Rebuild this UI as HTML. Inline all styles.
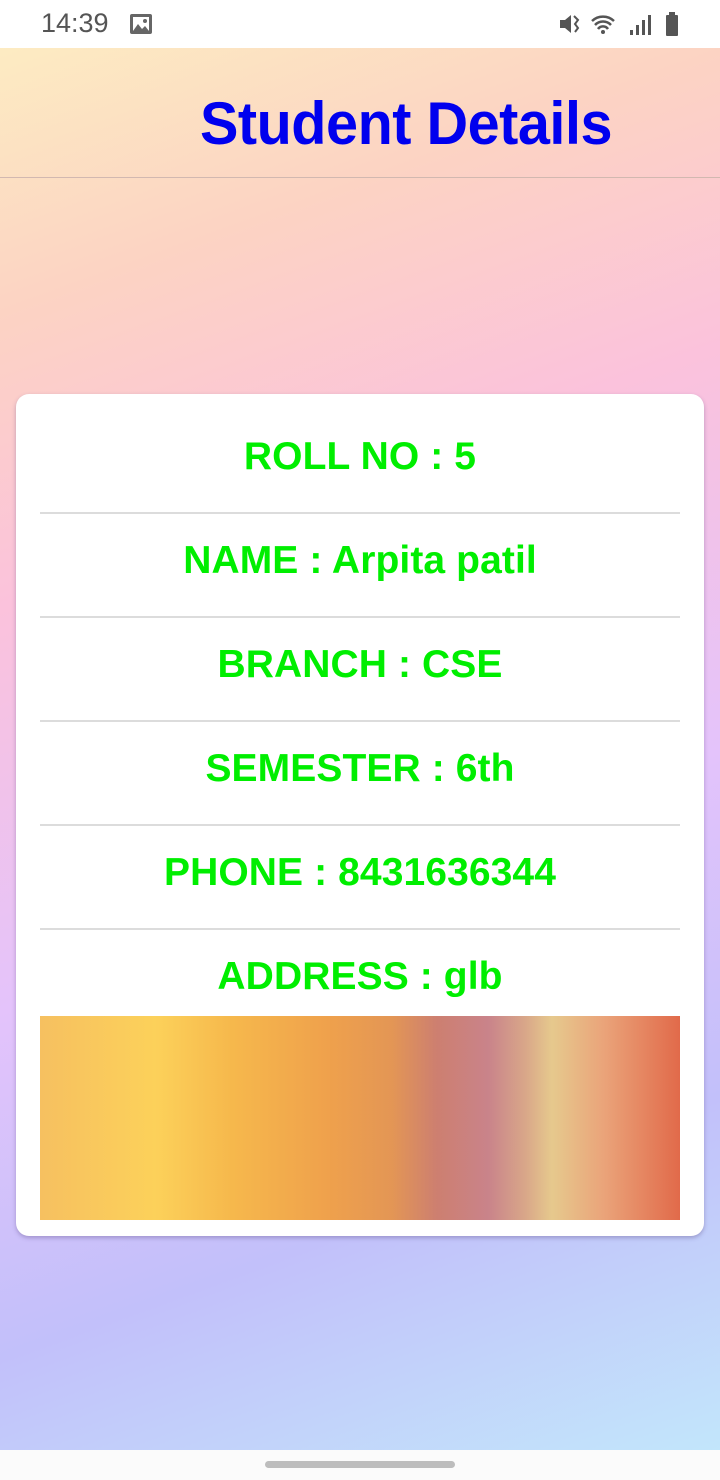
<!DOCTYPE html>
<html><head><meta charset="utf-8"><style>
*{margin:0;padding:0;box-sizing:border-box}
body{width:720px;height:1480px;position:relative;overflow:hidden;font-family:"Liberation Sans",Roboto,sans-serif;
background:linear-gradient(160deg,#fdf0c2 0%,#fcd3c3 18%,#fbc2dc 35%,#e4c3fb 58%,#c2c0fa 78%,#c2e9fb 100%)}
.status{position:absolute;top:0;left:0;width:720px;height:48px;background:#fff}
.time{position:absolute;left:41px;top:8px;font-size:27px;color:#555}
.title{position:absolute;left:106px;width:600px;text-align:center;top:94px;line-height:60px;font-size:60px;font-weight:bold;color:#0000ee;letter-spacing:-0.5px;transform:scaleX(0.96);transform-origin:300px 0}
.hline{position:absolute;left:0;top:177px;width:720px;height:1px;background:#d2b8b0}
.card{position:absolute;left:16px;top:394px;width:688px;height:842px;background:#fff;border-radius:13px;box-shadow:0 2px 4px rgba(80,60,120,.35)}
.row{position:absolute;left:0;width:688px;text-align:center;font-size:39px;font-weight:bold;color:#00ee00;letter-spacing:0.1px}
.div{position:absolute;left:24px;width:640px;height:2px;background:#dcdcdc}
.img{position:absolute;left:24px;top:622px;width:640px;height:204px;
background:linear-gradient(90deg,#f6c060 0%,#fcd15a 18%,#f6b84c 30%,#efa14c 45%,#e39655 55%,#cd7f70 62%,#c9838a 70%,#d9a889 76%,#e6c98d 80%,#eaa47a 88%,#e16a4a 100%)}
.nav{position:absolute;left:0;top:1450px;width:720px;height:30px;background:#fbfbfb}
.pill{position:absolute;left:265px;top:1461px;width:190px;height:7px;border-radius:4px;background:#bdbdbd}
</style></head><body>
<div class="status">
<div class="time">14:39</div>
<svg style="position:absolute;left:129px;top:13px" width="24" height="22" viewBox="0 0 24 22"><rect x="1" y="1" width="22" height="20" rx="2" fill="#666"/><rect x="4" y="4" width="16" height="14" fill="#fff"/><path d="M4 18l5-7 4 5 3-3 4 5z" fill="#666"/><circle cx="16" cy="8" r="2" fill="#666"/></svg>
<svg style="position:absolute;left:558px;top:12px" width="126" height="24" viewBox="0 0 126 24">
<path d="M2 8h5l6-5v18l-6-5H2z" fill="#555"/><path d="M16 4l4 4-3 4 3 4-3 4" stroke="#555" stroke-width="2" fill="none"/>
<path d="M34 9a16 16 0 0 1 22 0M37 13a11 11 0 0 1 16 0M40 17a6 6 0 0 1 10 0" stroke="#555" stroke-width="2.5" fill="none"/><circle cx="45" cy="20" r="2" fill="#555"/>
<rect x="72" y="18" width="3" height="5" fill="#555"/><rect x="78" y="13" width="3" height="10" fill="#555"/><rect x="84" y="8" width="3" height="15" fill="#555"/><rect x="90" y="3" width="3" height="20" fill="#555"/>
<rect x="108" y="3" width="12" height="21" rx="1" fill="#555"/><rect x="111" y="0" width="6" height="4" fill="#555"/></svg>
</div>
<div class="title">Student Details</div>
<div class="hline"></div>
<div class="card">
<div class="row" style="top:41px">ROLL NO : 5</div>
<div class="div" style="top:118px"></div>
<div class="row" style="top:145px">NAME : Arpita patil</div>
<div class="div" style="top:222px"></div>
<div class="row" style="top:249px">BRANCH : CSE</div>
<div class="div" style="top:326px"></div>
<div class="row" style="top:353px">SEMESTER : 6th</div>
<div class="div" style="top:430px"></div>
<div class="row" style="top:457px">PHONE : 8431636344</div>
<div class="div" style="top:534px"></div>
<div class="row" style="top:561px">ADDRESS : glb</div>
<div class="img"></div>
</div>
<div class="nav"></div><div class="pill"></div>
</body></html>
